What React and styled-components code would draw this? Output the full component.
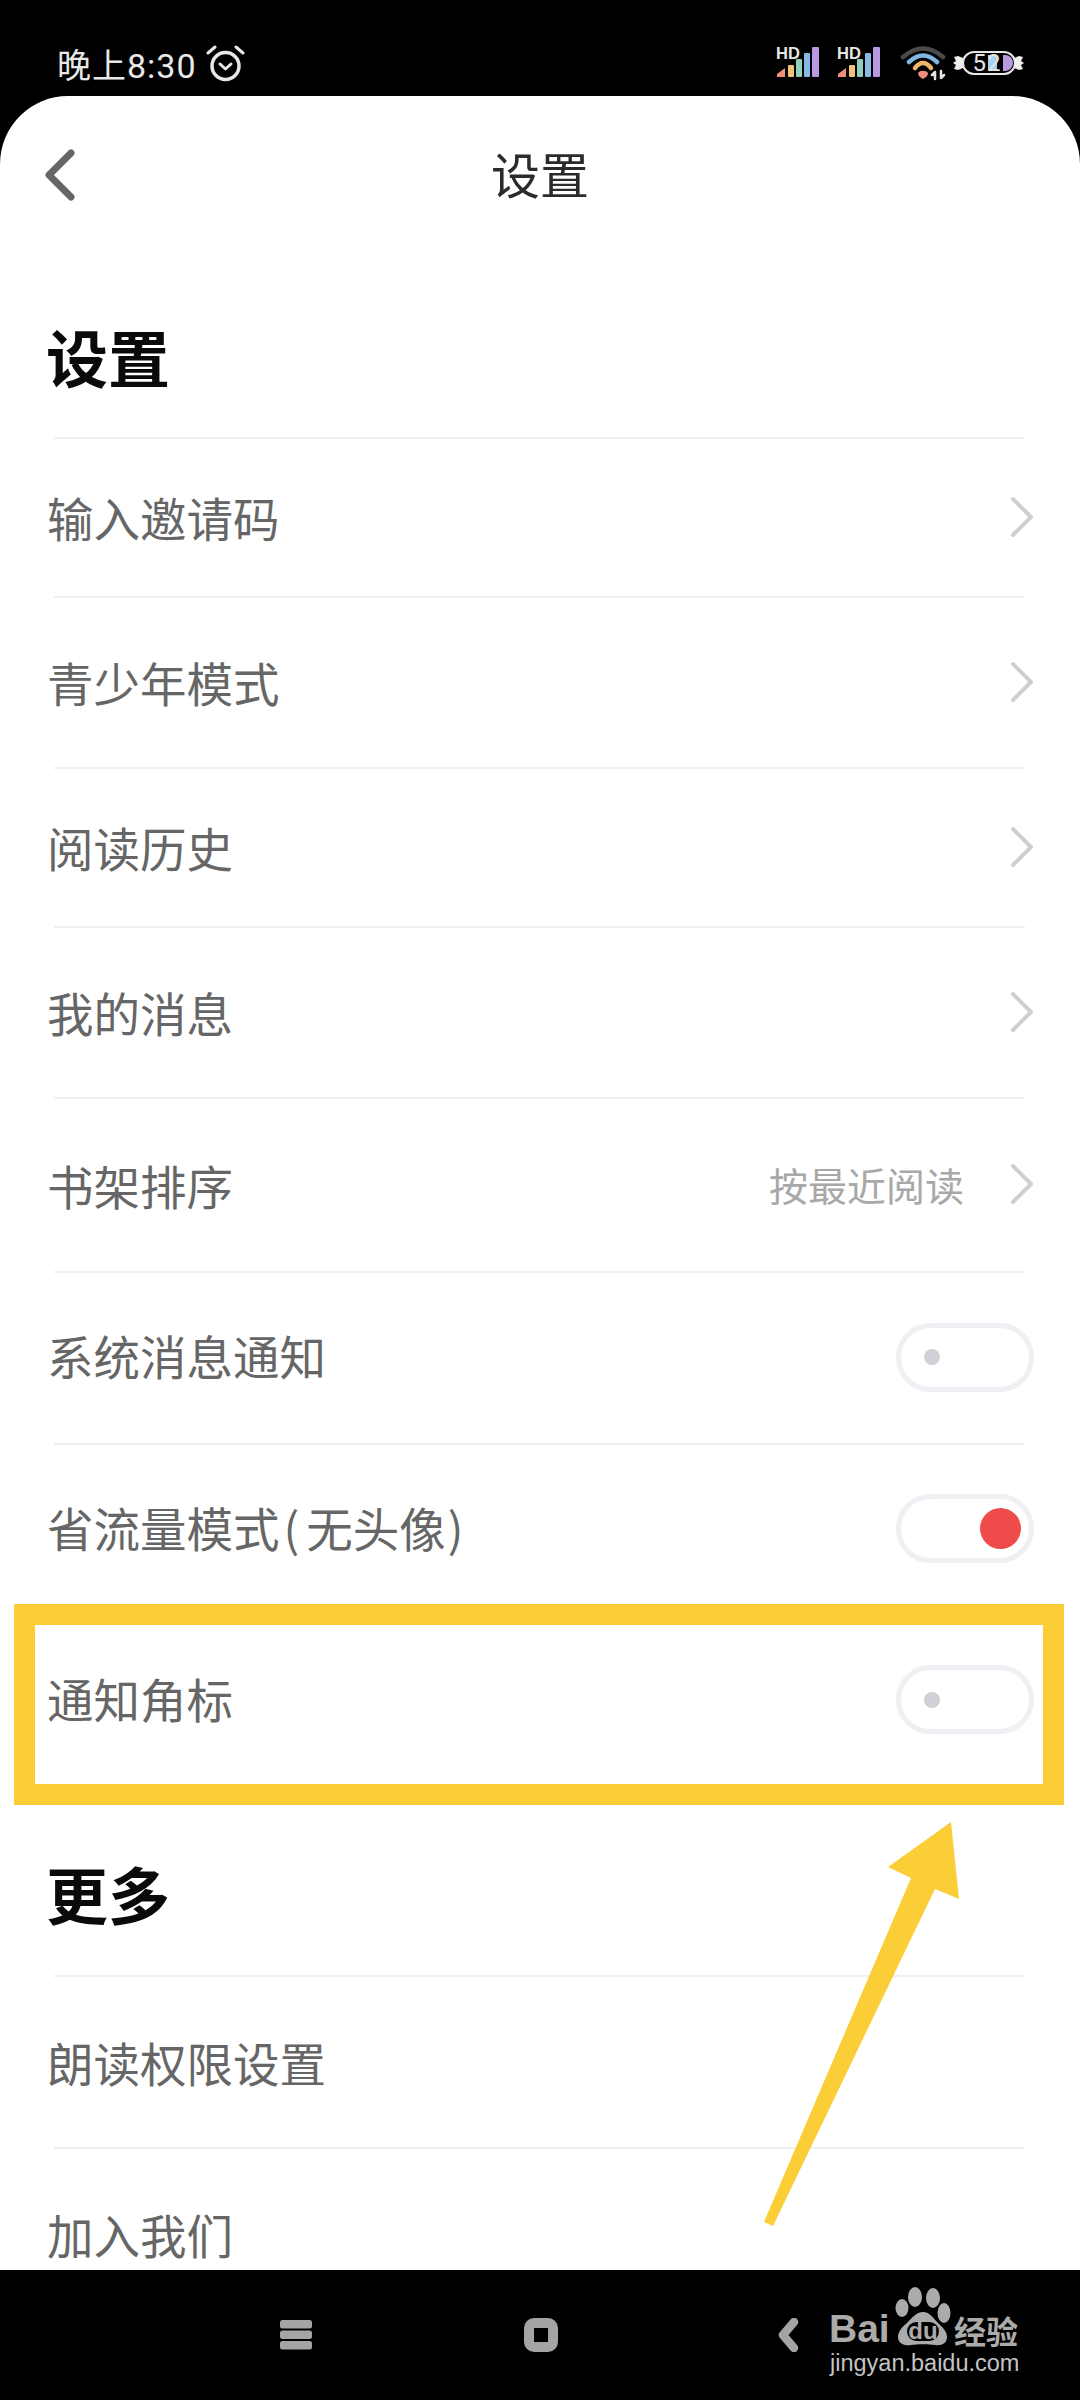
import React from 'react'
import styled, { createGlobalStyle } from 'styled-components'

const GlobalStyle = createGlobalStyle`
	html, body {
		margin: 0;
		padding: 0;
		background: #000;
		font-family: "Noto Sans CJK SC", "Noto Sans", sans-serif;
	}
`

const Screen = styled.div`
	position: relative;
	width: 1080px;
	height: 2400px;
	display: flex;
	flex-direction: column;
	background: #000;
	overflow: hidden;
`

const StatusBar = styled.div`
	height: 96px;
	flex: none;
	display: flex;
	align-items: center;
	justify-content: space-between;
	padding: 30px 56px 0 57px;
	box-sizing: border-box;
`

const StatusLeft = styled.div`
	display: flex;
	align-items: center;
	gap: 9px;
	color: #e8e8e8;
	font-size: 34px;
	font-family: "Roboto", "Noto Sans CJK SC", sans-serif;
	letter-spacing: 1px;
`

const StatusRight = styled.div`
	display: flex;
	align-items: center;
	gap: 19px;
`

const SignalGroup = styled.div`
	display: flex;
	align-items: center;
	gap: 17px;
	margin-top: -4px;
`

const WifiGroup = styled.div`
	display: flex;
	align-items: center;
	gap: 7px;
`

const Card = styled.div`
	flex: 1;
	min-height: 0;
	background: #fff;
	border-radius: 68px 68px 0 0;
	overflow: hidden;
`

const Header = styled.div`
	height: 158px;
	padding-bottom: 6px;
	box-sizing: border-box;
	display: flex;
	align-items: center;
	justify-content: center;
	position: relative;
`

const BackButton = styled.svg`
	position: absolute;
	left: 40px;
	top: 51px;
`

const HeaderTitle = styled.div`
	font-size: 49px;
	color: #2b2b2b;
`

const SectionTitle = styled.div`
	height: ${({ $height }) => $height}px;
	padding: ${({ $top }) => $top}px 0 0 46px;
	box-sizing: border-box;
	display: flex;
	align-items: center;
	font-size: 62px;
	font-weight: 700;
	color: #0a0a0a;
`

const Divider = styled.div`
	height: 2px;
	margin: 0 55px 0 54px;
	background: #f0f0f2;
`

const Row = styled.div`
	height: ${({ $height }) => $height}px;
	padding: 0 46px 2px 47px;
	box-sizing: border-box;
	display: flex;
	align-items: center;
	justify-content: space-between;
`

const RowLabel = styled.div`
	font-size: 46.5px;
	color: #666;
	margin-bottom: ${({ $raised }) => ($raised ? 5 : 0)}px;
`

const Paren = styled.span`
	margin: ${({ $close }) => ($close ? '0 0 0 2px' : '0 7px 0 4px')};
`

const RowRight = styled.div`
	display: flex;
	align-items: center;
	gap: 44px;
`

const RowValue = styled.div`
	font-size: 39px;
	color: #a8a8a8;
`

const Switch = styled.div`
	width: 138px;
	height: 69px;
	box-sizing: border-box;
	border: 5px solid #efeff4;
	border-radius: 35px;
	display: flex;
	align-items: center;
	justify-content: ${({ $on }) => ($on ? 'flex-end' : 'flex-start')};
	padding: ${({ $on }) => ($on ? '0 8px' : '0 23px')};
`

const Knob = styled.div`
	width: ${({ $on }) => ($on ? 41 : 16)}px;
	height: ${({ $on }) => ($on ? 41 : 16)}px;
	border-radius: 50%;
	background: ${({ $on }) => ($on ? '#ef4b4b' : '#d0d0d8')};
`

const NavBar = styled.div`
	height: 130px;
	flex: none;
	display: flex;
	align-items: center;
	padding-left: 280px;
	box-sizing: border-box;
	background: #000;
`

const NavMenu = styled.svg`
	margin-right: 212px;
`

const NavHome = styled.svg`
	margin-right: 219px;
`

/* annotation drawn on top of the screenshot */
const Highlight = styled.div`
	position: absolute;
	left: 14px;
	top: 1604px;
	width: 1050px;
	height: 201px;
	box-sizing: border-box;
	border: 21px solid #fbce37;
`

const Arrow = styled.svg`
	position: absolute;
	left: 0;
	top: 0;
`

const Watermark = styled.div`
	position: absolute;
	left: 829px;
	top: 2285px;
	width: 195px;
	height: 96px;
	color: #ababab;
	font-family: "Liberation Sans", sans-serif;
`

const LogoBai = styled.span`
	position: absolute;
	left: 0;
	top: 20px;
	font-size: 39px;
	line-height: 48px;
	font-weight: 700;
`

const LogoPaw = styled.svg`
	position: absolute;
	left: 66px;
	top: 0;
`

const LogoCn = styled.span`
	position: absolute;
	left: 125px;
	top: 28px;
	font-size: 32px;
	line-height: 34px;
	font-family: "Noto Sans CJK SC", sans-serif;
	font-weight: 700;
	white-space: nowrap;
`

const LogoUrl = styled.span`
	position: absolute;
	left: 1px;
	top: 65px;
	font-size: 23.5px;
	line-height: 26px;
	white-space: nowrap;
	color: #c4c4c4;
`

const Chevron = () => (
	<svg width="26" height="42" viewBox="0 0 26 42" fill="none">
		<path d="M5 3 L23 21 L5 39" stroke="#cfcfcf" strokeWidth="4" strokeLinecap="round" strokeLinejoin="round" />
	</svg>
)

const AlarmIcon = () => (
	<svg width="39" height="38" viewBox="0 0 39 38" fill="none" stroke="#e8e8e8">
		<circle cx="19.5" cy="22" r="13.5" strokeWidth="3.5" />
		<path d="M14 20 L19.5 25 L25 20" strokeWidth="3" strokeLinecap="round" strokeLinejoin="round" />
		<path d="M2 9 L9 3 M37 9 L30 3" strokeWidth="3" strokeLinecap="round" />
	</svg>
)

const SignalIcon = () => (
	<svg width="44" height="34" viewBox="0 -3 44 34">
		<text x="0" y="12" fontSize="16.5" fontWeight="700" fill="#e6e6e6" fontFamily="Liberation Sans, sans-serif">HD</text>
		<path d="M1 30 L1 27 L9 21 L9 30 Z" fill="#f0907c" />
		<rect x="12" y="18" width="6" height="12" rx="1" fill="#f1c27a" />
		<rect x="20" y="12" width="6" height="18" rx="1" fill="#8fd0bd" />
		<rect x="28" y="6" width="6" height="24" rx="1" fill="#86b9e6" />
		<rect x="36" y="0" width="7" height="30" rx="1" fill="#b79be0" />
	</svg>
)

const WifiIcon = () => (
	<svg width="46" height="35" viewBox="0 0 46 35" fill="none" strokeLinecap="round">
		<path d="M3 11 Q23 -6 43 11" stroke="#4a4a4a" strokeWidth="4.5" />
		<path d="M9 16 Q23 3 37 16" stroke="#80b6e2" strokeWidth="4.5" />
		<path d="M15 22 Q23 12 31 22" stroke="#eeb56e" strokeWidth="4.5" />
		<path d="M18 27 C20 24 26 24 28 27 C28 30 25 32 23 33 C21 32 18 30 18 27 Z" fill="#f08c7c" />
		<path d="M35 33 L35 26 M32 29 L35 26 M41 25 L41 32 M41 32 L44 29" stroke="#e4e4e4" strokeWidth="2.5" />
	</svg>
)

const BatteryBox = styled.div`
	position: relative;
	width: 71px;
	height: 24px;
	display: flex;
	align-items: center;
	justify-content: center;
`

const BatteryShell = styled.div`
	position: absolute;
	left: 9px;
	right: 8px;
	top: 0;
	bottom: 0;
	box-sizing: border-box;
	border: 2px solid #e8e8e8;
	border-radius: 12px;
	padding: 2px;
`

const BatteryFill = styled.div`
	position: absolute;
	left: ${({ $left }) => $left}px;
	width: ${({ $width }) => $width}px;
	top: 2px;
	bottom: 2px;
	border-radius: ${({ $radius }) => $radius};
	background: ${({ $color }) => $color};
`

const BatteryText = styled.span`
	position: relative;
	font-family: "Roboto", sans-serif;
	font-size: 24px;
	line-height: 24px;
	color: #e4e4e4;
	letter-spacing: 1px;
	margin-right: 3px;
`

const CandyEnd = styled.svg`
	position: absolute;
	top: 2px;
	${({ $side }) => $side}: 0;
`

const Battery = () => (
	<BatteryBox>
		<CandyEnd $side="left" width="10" height="20" viewBox="0 0 10 20">
			<path d="M10 5 L5 3 L1 4 L3 8 L0 10 L3 12 L1 16 L5 17 L10 15 Z" fill="#eee" />
		</CandyEnd>
		<BatteryShell>
			<BatteryFill $left={24} $width={9} $radius="0" $color="#a8d4f2" />
			<BatteryFill $left={39} $width={10} $radius="0 8px 8px 0" $color="#b79be0" />
		</BatteryShell>
		<BatteryText>52</BatteryText>
		<CandyEnd $side="right" width="10" height="20" viewBox="0 0 10 20">
			<path d="M0 5 L5 3 L9 4 L7 8 L10 10 L7 12 L9 16 L5 17 L0 15 Z" fill="#eee" />
		</CandyEnd>
	</BatteryBox>
)

const BackArrow = () => (
	<BackButton width="40" height="56" viewBox="0 0 40 56" fill="none">
		<path d="M31 6 L9 28 L31 50" stroke="#666" strokeWidth="7" strokeLinecap="round" strokeLinejoin="round" />
	</BackButton>
)

const SETTINGS = [
	{ label: '输入邀请码', height: 157, kind: 'link' },
	{ label: '青少年模式', height: 169, kind: 'link' },
	{ label: '阅读历史', height: 157, kind: 'link' },
	{ label: '我的消息', height: 169, kind: 'link' },
	{ label: '书架排序', height: 172, kind: 'link', value: '按最近阅读' },
	{ label: '系统消息通知', height: 170, kind: 'switch', on: false },
	{
		label: <>省流量模式<Paren>(</Paren>无头像<Paren $close>)</Paren></>,
		height: 169,
		kind: 'switch',
		on: true,
	},
	{ label: '通知角标', height: 169, kind: 'switch', on: false },
]

const MORE = [
	{ label: '朗读权限设置', height: 170, kind: 'none' },
	{ label: '加入我们', height: 170, kind: 'none' },
]

const SettingRow = ({ label, height, kind, value, on }) => (
	<Row $height={height}>
		<RowLabel $raised={kind === 'switch'}>{label}</RowLabel>
		{kind === 'link' && (
			<RowRight>
				{value && <RowValue>{value}</RowValue>}
				<Chevron />
			</RowRight>
		)}
		{kind === 'switch' && (
			<Switch $on={on}>
				<Knob $on={on} />
			</Switch>
		)}
	</Row>
)

const App = () => (
	<Screen>
		<GlobalStyle />
		<StatusBar>
			<StatusLeft>
				<span>晚上8:30</span>
				<AlarmIcon />
			</StatusLeft>
			<StatusRight>
				<SignalGroup>
					<SignalIcon />
					<SignalIcon />
				</SignalGroup>
				<WifiGroup>
					<WifiIcon />
					<Battery />
				</WifiGroup>
			</StatusRight>
		</StatusBar>
		<Card>
			<Header>
				<BackArrow />
				<HeaderTitle>设置</HeaderTitle>
			</Header>
			<SectionTitle $height={183} $top={21}>设置</SectionTitle>
			{SETTINGS.map((item, i) => (
				<React.Fragment key={i}>
					<Divider />
					<SettingRow {...item} />
				</React.Fragment>
			))}
			<SectionTitle $height={190} $top={25}>更多</SectionTitle>
			{MORE.map((item, i) => (
				<React.Fragment key={i}>
					<Divider />
					<SettingRow {...item} />
				</React.Fragment>
			))}
		</Card>
		<NavBar>
			<NavMenu width="32" height="30" viewBox="0 0 32 30" fill="#a4a4a4">
				<rect x="0" y="0" width="32" height="8.5" rx="2.5" />
				<rect x="0" y="10.5" width="32" height="8.5" rx="2.5" />
				<rect x="0" y="21" width="32" height="8.5" rx="2.5" />
			</NavMenu>
			<NavHome width="34" height="34" viewBox="0 0 34 34" fill="none">
				<rect x="5" y="5" width="24" height="24" rx="5" stroke="#a4a4a4" strokeWidth="10" />
			</NavHome>
			<svg width="22" height="34" viewBox="0 0 22 34" fill="none">
				<path d="M17 4 L6 17 L17 30" stroke="#a4a4a4" strokeWidth="8.5" strokeLinecap="round" strokeLinejoin="round" />
			</svg>
		</NavBar>
		<Highlight />
		<Arrow width="1080" height="2400" viewBox="0 0 1080 2400">
			<path d="M951 1822 L888 1867 L911 1878 L764 2222 L773 2226 L935 1889 L959 1899 Z" fill="#fbce37" />
		</Arrow>
		<Watermark>
			<LogoBai>Bai</LogoBai>
			<LogoPaw width="58" height="62" viewBox="0 0 58 62">
				<ellipse cx="20" cy="12" rx="7" ry="10" fill="#ababab" />
				<ellipse cx="38" cy="13" rx="7" ry="10" fill="#ababab" />
				<ellipse cx="7" cy="23" rx="6.5" ry="9" fill="#ababab" />
				<ellipse cx="49" cy="28" rx="6.5" ry="10" fill="#ababab" />
				<path d="M28 27 C21 27 17 33 12 38 C6 43 3 47 3 52 C3 59 10 61 16 60 C22 59 34 59 40 60 C47 61 52 58 52 52 C52 46 47 42 43 38 C38 33 35 27 28 27 Z" fill="#ababab" />
				<rect x="12" y="37" width="32" height="19" rx="9.5" fill="#000" />
				<text x="28" y="54" fontSize="24" fontWeight="700" textAnchor="middle" fill="#ababab" fontFamily="Liberation Sans, sans-serif">du</text>
			</LogoPaw>
			<LogoCn>经验</LogoCn>
			<LogoUrl>jingyan.baidu.com</LogoUrl>
		</Watermark>
	</Screen>
)

export default App
